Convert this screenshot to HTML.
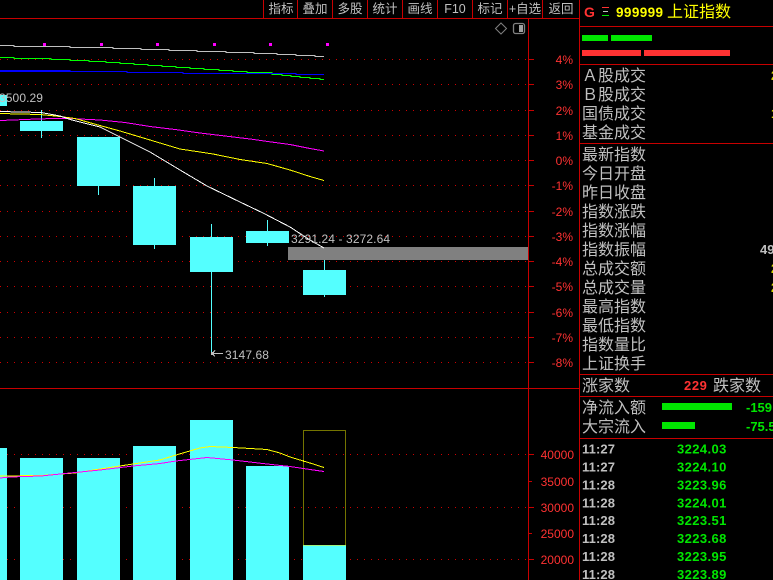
<!DOCTYPE html>
<html><head><meta charset="utf-8">
<style>
html,body{margin:0;padding:0;background:#000;width:773px;height:580px;overflow:hidden}
svg{display:block}
text{font-family:"Liberation Sans","WenQuanYi Zen Hei","Noto Sans CJK SC",sans-serif;white-space:pre}
.cn{font-size:16px;fill:#c0c0c0;font-family:"WenQuanYi Zen Hei","Noto Sans CJK SC",sans-serif}
.tb{font-size:12.500px;fill:#c0c0c0;text-anchor:middle;font-family:"Liberation Sans","WenQuanYi Zen Hei","Noto Sans CJK SC",sans-serif}
.ax{font-size:12px;fill:#ff3232;text-anchor:end}
.lb{font-size:12px;fill:#c0c0c0;letter-spacing:.1px}
.t{font-size:13px;font-weight:bold;fill:#c0c0c0;letter-spacing:.1px}
.p{font-size:13px;font-weight:bold;fill:#00e600;letter-spacing:.4px}
</style></head><body>
<svg width="773" height="580" viewBox="0 0 773 580" xmlns="http://www.w3.org/2000/svg">
<rect width="773" height="580" fill="#000"/>
<g shape-rendering="crispEdges">
<!-- grid -->
<g stroke="#d00000" stroke-dasharray="1 6" fill="none">
<path d="M0 59.500H528M0 84.500H528M0 110.500H528M0 135.500H528M0 160.500H528M0 185.500H528M0 211.500H528M0 236.500H528M0 261.500H528M0 286.500H528M0 312.500H528M0 337.500H528M0 362.500H528M0 454.500H528M0 507.500H528M0 559.500H528"/>
</g>
<g stroke="#c80000" fill="none">
<path d="M0 18.500H579M0 388.500H579M528.500 19V580M579.500 0V580"/>
<path d="M263.500 0V18M297.500 0V18M332.500 0V18M367.500 0V18M402.500 0V18M437.500 0V18M472.500 0V18M507.500 0V18M542.500 0V18"/>
<path d="M528 59.500H534M528 84.500H534M528 110.500H534M528 135.500H534M528 160.500H534M528 185.500H534M528 211.500H534M528 236.500H534M528 261.500H534M528 286.500H534M528 312.500H534M528 337.500H534M528 362.500H534"/>
<path d="M528 454.500H534M528 481.500H532M528 507.500H534M528 533.500H532M528 559.500H534"/>
<path d="M580 26.500H773M580 64.500H773M580 143.500H773M580 374.500H773M580 396.500H773M580 438.500H773"/>
</g>
<!-- magenta dots -->
<g fill="#ff00ff">
<rect x="43" y="43" width="3" height="3"/><rect x="100" y="43" width="3" height="3"/><rect x="156" y="43" width="3" height="3"/><rect x="213" y="43" width="3" height="3"/><rect x="269" y="43" width="3" height="3"/><rect x="326" y="43" width="3" height="3"/>
</g>
<!-- volume -->
<g fill="#54ffff">
<rect x="0" y="448" width="7" height="132"/>
<rect x="20" y="458" width="43" height="122"/>
<rect x="77" y="458" width="43" height="122"/>
<rect x="133" y="446" width="43" height="134"/>
<rect x="190" y="420" width="43" height="160"/>
<rect x="246" y="466" width="43" height="114"/>
<rect x="303" y="545" width="43" height="35"/>
</g>
<rect x="303.500" y="430.500" width="42" height="115" fill="none" stroke="#e8e800" stroke-dasharray="1 1"/>
<!-- candles -->
<g fill="#54ffff">
<rect x="0" y="95" width="7" height="11"/>
<rect x="41" y="110" width="1" height="28"/><rect x="20" y="121" width="43" height="10"/>
<rect x="98" y="186" width="1" height="9"/><rect x="77" y="137" width="43" height="49"/>
<rect x="154" y="178" width="1" height="71"/><rect x="133" y="186" width="43" height="59"/>
<rect x="211" y="224" width="1" height="130"/><rect x="190" y="237" width="43" height="35"/>
<rect x="267" y="220" width="1" height="26"/><rect x="246" y="231" width="43" height="12"/>
<rect x="324" y="260" width="1" height="37"/><rect x="303" y="270" width="43" height="25"/>
</g>
<rect x="288" y="247" width="240" height="13" fill="#808080"/>
</g>
<!-- MA lines -->
<g fill="none" stroke-width="1" shape-rendering="crispEdges">
<polyline stroke="#c0c0c0" points="0,45.500 14,45.500 14,46.500 70,46.500 70,47.500 113,47.500 113,48.500 141,48.500 141,49.500 169,49.500 169,50.500 197,50.500 197,51.500 226,51.500 226,52.500 254,52.500 254,53.500 277,53.500 277,54.500 296,54.500 296,55.500 315,55.500 315,56.500 324,56.500"/>
<polyline stroke="#00ff00" points="0,57.500 14,57.500 14,58.500 51,58.500 51,59.500 70,59.500 70,60.500 89,60.500 89,61.500 106,61.500 106,62.500 120,62.500 120,63.500 134,63.500 134,64.500 148,64.500 148,65.500 162,65.500 162,66.500 176,66.500 176,67.500 190,67.500 190,68.500 204,68.500 204,69.500 219,69.500 219,70.500 233,70.500 233,71.500 247,71.500 247,72.500 272,72.500 272,74.500 282,74.500 282,75.500 291,75.500 291,76.500 300,76.500 300,77.500 310,77.500 310,78.500 320,78.500 320,79.500 324,79.500"/>
<polyline stroke="#0000ff" points="0,70.500 70,70.500 70,71.500 127,71.500 127,72.500 183,72.500 183,73.500 296,73.500 296,74.500 324,74.500"/>
<polyline stroke="#0000ff" points="0,71.500 70,71.500"/>
<polyline stroke="#ff00ff" points="0,120.500 13,120 41,118.800 70,118.500 100,120 125,122.500 150,126.500 175,129.500 200,133 225,136 250,139 275,142.500 290,144.500 310,148.500 324,151"/>
<polyline stroke="#ffff00" points="0,113.500 40,114.500 60,116.500 75,118.500 98,125 120,131 150,140 180,149 200,152 213,154 240,159.500 267,163.500 290,170 310,176.500 324,180.500"/>
<polyline stroke="#ffffff" points="0,111.500 41,112.500 60,116 72,120 100,127 120,137 150,152 180,170 207,186 240,202 263,213 290,227 310,240 324,248"/>
<polyline stroke="#ffff00" points="0,476 41,475.500 75,473 100,469 133,464 160,460 176,455 200,448 210,446.500 233,447.500 267,449.500 280,453 290,457 310,463 324,467.500"/>
<polyline stroke="#ff00ff" points="0,478 10,477 41,476 70,473 100,470 133,466 160,463.500 176,461 207,457.500 233,460 267,464 290,466.500 310,469.500 324,471.500"/>
</g>
<g stroke="#c0c0c0" fill="none" shape-rendering="crispEdges">
<path d="M212 353.500H223M212 353.500L215 350.500M212 353.500L215 356.500"/>
</g>
<rect x="211" y="352" width="3" height="3" fill="#c0c0c0" shape-rendering="crispEdges"/>
<!-- chart labels -->
<text class="lb" x="-1" y="102">3500.29</text>
<text class="lb" x="291" y="243">3291.24 - 3272.64</text>
<text class="lb" x="225" y="359">3147.68</text>
<!-- icons -->
<path d="M501 23L506.500 28.500L501 34L495.500 28.500Z" fill="none" stroke="#808080"/>
<rect x="513.500" y="23.500" width="11" height="10" rx="2" fill="none" stroke="#808080" stroke-width="1.300"/>
<rect x="519" y="25" width="4" height="7" fill="#a0a0a0" shape-rendering="crispEdges"/>
<!-- toolbar -->
<text class="tb" x="281" y="13">指标</text>
<text class="tb" x="315" y="13">叠加</text>
<text class="tb" x="350" y="13">多股</text>
<text class="tb" x="385" y="13">统计</text>
<text class="tb" x="420" y="13">画线</text>
<text class="tb" x="455" y="13">F10</text>
<text class="tb" x="490" y="13">标记</text>
<text class="tb" x="525" y="13">+自选</text>
<text class="tb" x="561" y="13">返回</text>
<!-- axis labels -->
<text class="ax" x="573" y="64">4%</text>
<text class="ax" x="573" y="89">3%</text>
<text class="ax" x="573" y="115">2%</text>
<text class="ax" x="573" y="140">1%</text>
<text class="ax" x="573" y="165">0%</text>
<text class="ax" x="573" y="190">-1%</text>
<text class="ax" x="573" y="216">-2%</text>
<text class="ax" x="573" y="241">-3%</text>
<text class="ax" x="573" y="266">-4%</text>
<text class="ax" x="573" y="291">-5%</text>
<text class="ax" x="573" y="317">-6%</text>
<text class="ax" x="573" y="342">-7%</text>
<text class="ax" x="573" y="367">-8%</text>
<text class="ax" x="574" y="459">40000</text>
<text class="ax" x="574" y="486">35000</text>
<text class="ax" x="574" y="512">30000</text>
<text class="ax" x="574" y="538">25000</text>
<text class="ax" x="574" y="564">20000</text>
<!-- right panel header -->
<text x="584" y="17" font-size="14" font-weight="bold" fill="#ff3232">G</text>
<g shape-rendering="crispEdges">
<rect x="602" y="7" width="7" height="1" fill="#ff3232"/>
<rect x="603" y="11" width="5" height="1" fill="#c0c0c0"/>
<rect x="602" y="15" width="7" height="1" fill="#00e600"/>
<rect x="582" y="35" width="26" height="6" fill="#00e600"/>
<rect x="611" y="35" width="41" height="6" fill="#00e600"/>
<rect x="582" y="50" width="59" height="6" fill="#ff3232"/>
<rect x="644" y="50" width="86" height="6" fill="#ff3232"/>
<rect x="662" y="403" width="70" height="7" fill="#00e600"/>
<rect x="662" y="422" width="33" height="7" fill="#00e600"/>
</g>
<text x="616" y="17" font-size="13.500" font-weight="bold" fill="#ffff00" letter-spacing=".4">999999</text>
<text class="cn" x="667" y="17" style="fill:#ffff00">上证指数</text>
<!-- labels -->
<text class="cn" x="582" y="81" textLength="64">Ａ股成交</text>
<text class="cn" x="582" y="100" textLength="64">Ｂ股成交</text>
<text class="cn" x="582" y="119">国债成交</text>
<text class="cn" x="582" y="138">基金成交</text>
<text class="cn" x="582" y="160">最新指数</text>
<text class="cn" x="582" y="179">今日开盘</text>
<text class="cn" x="582" y="198">昨日收盘</text>
<text class="cn" x="582" y="217">指数涨跌</text>
<text class="cn" x="582" y="236">指数涨幅</text>
<text class="cn" x="582" y="255">指数振幅</text>
<text class="cn" x="582" y="274">总成交额</text>
<text class="cn" x="582" y="293">总成交量</text>
<text class="cn" x="582" y="312">最高指数</text>
<text class="cn" x="582" y="331">最低指数</text>
<text class="cn" x="582" y="350">指数量比</text>
<text class="cn" x="582" y="369">上证换手</text>
<text class="cn" x="582" y="391">涨家数</text>
<text class="cn" x="713" y="391">跌家数</text>
<text x="684" y="390" font-size="13" font-weight="bold" fill="#ff3232" letter-spacing=".6">229</text>
<text class="cn" x="582" y="413">净流入额</text>
<text class="cn" x="582" y="432">大宗流入</text>
<!-- cut-off values -->
<text x="771" y="80" font-size="13" font-weight="bold" fill="#d8d800">2</text>
<text x="771" y="118" font-size="13" font-weight="bold" fill="#d8d800">1</text>
<text x="760" y="254" font-size="13" font-weight="bold" fill="#c0c0c0">49</text>
<text x="771" y="273" font-size="13" font-weight="bold" fill="#d8d800">2</text>
<text x="771" y="292" font-size="13" font-weight="bold" fill="#d8d800">2</text>
<text x="746" y="412" font-size="13" font-weight="bold" fill="#00e600">-159</text>
<text x="746" y="431" font-size="13" font-weight="bold" fill="#00e600">-75.5</text>
<!-- ticks -->
<text class="t" x="582" y="453.500">11:27</text><text class="p" x="677" y="453.500">3224.03</text>
<text class="t" x="582" y="471.500">11:27</text><text class="p" x="677" y="471.500">3224.10</text>
<text class="t" x="582" y="489.500">11:28</text><text class="p" x="677" y="489.500">3223.96</text>
<text class="t" x="582" y="507.500">11:28</text><text class="p" x="677" y="507.500">3224.01</text>
<text class="t" x="582" y="525">11:28</text><text class="p" x="677" y="525">3223.51</text>
<text class="t" x="582" y="543">11:28</text><text class="p" x="677" y="543">3223.68</text>
<text class="t" x="582" y="561">11:28</text><text class="p" x="677" y="561">3223.95</text>
<text class="t" x="582" y="579">11:28</text><text class="p" x="677" y="579">3223.89</text>
</svg>
</body></html>
